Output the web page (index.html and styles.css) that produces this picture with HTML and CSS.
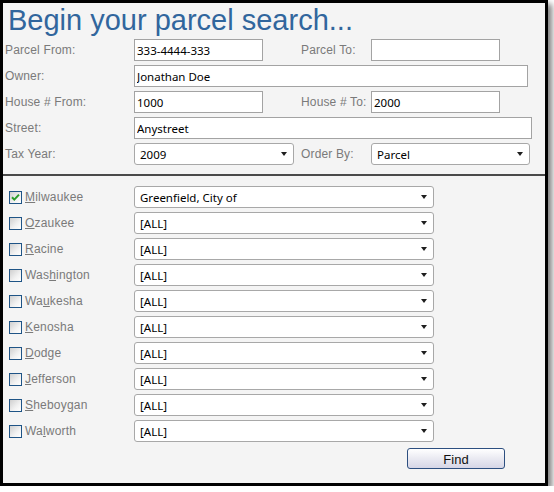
FILE: index.html
```html
<!DOCTYPE html>
<html lang="en">
<head>
<meta charset="utf-8">
<title>Parcel search</title>
<link rel="stylesheet" href="styles.css">
</head>
<body>
<div class="window">
  <h1 class="title">Begin your parcel search...</h1>
  <div class="fields">
    <div class="row">
      <label class="lbl">Parcel From:</label>
      <input class="txt w-short" type="text" value="333-4444-333">
      <label class="lbl lbl-2">Parcel To:</label>
      <input class="txt w-short" type="text" value="">
    </div>
    <div class="row">
      <label class="lbl">Owner:</label>
      <input class="txt w-owner" type="text" value="Jonathan Doe">
    </div>
    <div class="row">
      <label class="lbl">House # From:</label>
      <input class="txt w-short" type="text" value="1000">
      <label class="lbl lbl-2">House # To:</label>
      <input class="txt w-short" type="text" value="2000">
    </div>
    <div class="row">
      <label class="lbl">Street:</label>
      <input class="txt w-street" type="text" value="Anystreet">
    </div>
    <div class="row">
      <label class="lbl">Tax Year:</label>
      <span class="sel w-year"><select><option>2009</option></select></span>
      <label class="lbl lbl-3">Order By:</label>
      <span class="sel w-order"><select><option>Parcel</option></select></span>
    </div>
  </div>
  <div class="sep"></div>
  <div class="counties">
    <div class="crow">
      <label class="chk"><span class="box"><svg viewBox="0 0 11 11" width="11" height="11"><path d="M2 5.2 L4.3 7.6 L9 2.6" fill="none" stroke="#2a9d2a" stroke-width="2"/></svg></span><span class="cname"><u>M</u>ilwaukee</span></label>
      <span class="sel w-county"><select><option>Greenfield, City of</option></select></span>
    </div>
    <div class="crow">
      <label class="chk"><span class="box"></span><span class="cname"><u>O</u>zaukee</span></label>
      <span class="sel w-county"><select><option>[ALL]</option></select></span>
    </div>
    <div class="crow">
      <label class="chk"><span class="box"></span><span class="cname"><u>R</u>acine</span></label>
      <span class="sel w-county"><select><option>[ALL]</option></select></span>
    </div>
    <div class="crow">
      <label class="chk"><span class="box"></span><span class="cname">Was<u>h</u>ington</span></label>
      <span class="sel w-county"><select><option>[ALL]</option></select></span>
    </div>
    <div class="crow">
      <label class="chk"><span class="box"></span><span class="cname">Wa<u>u</u>kesha</span></label>
      <span class="sel w-county"><select><option>[ALL]</option></select></span>
    </div>
    <div class="crow">
      <label class="chk"><span class="box"></span><span class="cname"><u>K</u>enosha</span></label>
      <span class="sel w-county"><select><option>[ALL]</option></select></span>
    </div>
    <div class="crow">
      <label class="chk"><span class="box"></span><span class="cname"><u>D</u>odge</span></label>
      <span class="sel w-county"><select><option>[ALL]</option></select></span>
    </div>
    <div class="crow">
      <label class="chk"><span class="box"></span><span class="cname"><u>J</u>efferson</span></label>
      <span class="sel w-county"><select><option>[ALL]</option></select></span>
    </div>
    <div class="crow">
      <label class="chk"><span class="box"></span><span class="cname"><u>S</u>heboygan</span></label>
      <span class="sel w-county"><select><option>[ALL]</option></select></span>
    </div>
    <div class="crow">
      <label class="chk"><span class="box"></span><span class="cname">Wa<u>l</u>worth</span></label>
      <span class="sel w-county"><select><option>[ALL]</option></select></span>
    </div>
  </div>
  <div class="actions"><button class="find" type="button">Find</button></div>
</div>
</body>
</html>
```

FILE: styles.css
```css
* { box-sizing: border-box; }

html, body {
  margin: 0;
  padding: 0;
  background: #ffffff;
}

body {
  font-family: "Liberation Sans", Arial, sans-serif;
  font-size: 12px;
}

.window {
  width: 548px;
  border: 3px solid #000;
  background: #f4f4f4;
  padding: 2px 0 14px 0;
  box-shadow: 4px 4px 6px rgba(0, 0, 0, 0.5);
}

.title {
  margin: 0 0 0 5px;
  font-family: "Liberation Sans", Arial, sans-serif;
  font-weight: normal;
  font-size: 29px;
  line-height: 30px;
  color: #31669d;
}

.fields {
  margin-top: 4px;
  padding-left: 2px;
  display: flex;
  flex-direction: column;
  gap: 4px;
}

.row {
  display: flex;
  align-items: center;
  height: 22px;
}

.lbl {
  width: 129px;
  flex: none;
  color: #7a7a7a;
  font-size: 12px;
  letter-spacing: 0.15px;
}

.lbl-2 { margin-left: 38px; width: 70px; }
.lbl-3 { margin-left: 7px; width: 70px; }

.txt {
  flex: none;
  height: 22px;
  border: 1px solid #a3a3a3;
  background: #fff;
  padding: 0 2px;
  margin: 0;
  font-family: "Noto Sans", "DejaVu Sans", sans-serif;
  font-size: 11.5px;
  color: #000;
  outline: none;
}

.w-short { width: 129px; }
.w-owner { width: 394px; }
.w-street { width: 398px; }

.sel {
  position: relative;
  display: inline-block;
  flex: none;
  height: 22px;
}

.sel select {
  -webkit-appearance: none;
  appearance: none;
  width: 100%;
  height: 22px;
  margin: 0;
  border: 1px solid #a8a8a8;
  border-radius: 3px;
  background: #fff;
  padding: 0 0 0 5px;
  font-family: "Noto Sans", "DejaVu Sans", sans-serif;
  font-size: 11.5px;
  color: #000;
  outline: none;
}

.sel::after {
  content: "";
  position: absolute;
  right: 7px;
  top: 9px;
  border-left: 3px solid transparent;
  border-right: 3px solid transparent;
  border-top: 4px solid #1e1e1e;
}

.w-year { width: 160px; }
.w-order { width: 159px; }
.w-county { width: 300px; }

.sep {
  margin-top: 9px;
  border-top: 2px solid #4a4a4a;
}

.counties {
  margin-top: 10px;
  padding-left: 2px;
  display: flex;
  flex-direction: column;
  gap: 4px;
}

.crow {
  display: flex;
  align-items: center;
  height: 22px;
}

.chk {
  width: 129px;
  flex: none;
  display: flex;
  align-items: center;
  padding-left: 4px;
  color: #7a7a7a;
  font-size: 12px;
  letter-spacing: 0.2px;
}

.box {
  width: 13px;
  height: 13px;
  flex: none;
  border: 1px solid #1f5486;
  background: linear-gradient(135deg, #cfcfcf 0%, #f2f2f2 60%, #ffffff 100%);
  display: flex;
  align-items: center;
  justify-content: center;
  margin-right: 3px;
}

.box svg { display: block; }

.cname u {
  text-underline-offset: 1px;
}

.actions {
  margin-top: 6px;
  padding-left: 404px;
}

.find {
  width: 98px;
  height: 21px;
  margin: 0;
  padding: 1px 0 0 0;
  border: 1px solid #2d4f80;
  border-radius: 3px;
  background: linear-gradient(#ffffff 0%, #ececf3 45%, #d6d6e6 100%);
  font-family: "Liberation Sans", Arial, sans-serif;
  font-size: 13px;
  color: #111;
}
```
